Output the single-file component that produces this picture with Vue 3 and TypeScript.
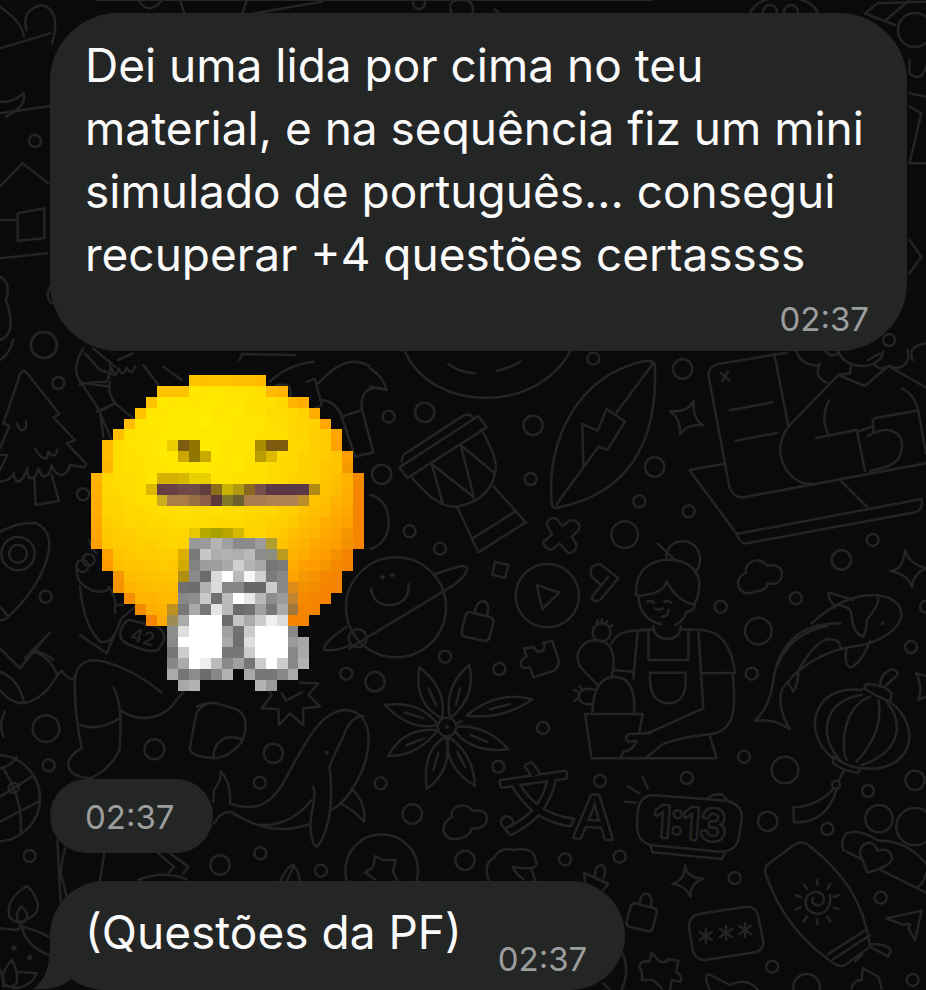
<script setup lang="ts">
interface Message {
  id: number
  lines: string[]
  time: string
}

interface Cell {
  x: number
  y: number
  fill: string
}

type Dot = [number, number, number]

const first: Message = {
  id: 1,
  lines: [
    'Dei uma lida por cima no teu',
    'material, e na sequência fiz um mini',
    'simulado de português... consegui',
    'recuperar +4 questões certassss',
  ],
  time: '02:37',
}
const last: Message = { id: 3, lines: ['(Questões da PF)'], time: '02:37' }

// First and last filled column of the face, one pair per pixel row.
const faceSpans: [number, number][] = [
  [9, 15], [6, 17], [5, 19], [4, 20], [3, 21], [2, 22], [1, 22], [1, 23], [1, 23],
  [0, 24], [0, 24], [0, 24], [0, 24], [0, 24], [0, 24], [0, 24],
  [1, 23], [1, 23], [2, 22], [2, 22], [3, 21], [4, 20], [5, 19],
]

// Row, first column, then colours: two digits are a grey, six a full colour.
const details: [number, number, string][] = [
  [6, 7, 'ecce00 7c5c10 917400'],
  [6, 15, 'a98c00 7b5c10 805c10'],
  [7, 8, 'cca700 8f7600 c9a900'],
  [7, 15, 'b99d00 dcb900'],
  [9, 6, 'd3b300 d3b300 d7b800 e9cf00 e9cf00'],
  [10, 5, 'dcb900 684044 684044 704a48 704a48 603e3c 8b6c1c c9b200 b09a10 8b6820 75504a 5a3846 5a3846 5a3846 5a3846 b18c12'],
  [11, 6, 'cbae20 a97c48 a97c48 967040 8c5e48 5b383c 807826 6b6030 a97c50 a97c50 b08252 b08252 b08252 b98d2a'],
  [14, 9, 'e8c800 b5a800 a9a000 b9a500 d4b900'],
  [15, 9, '99 9b b4 a0 8b 8b 9c b0a030'],
  [16, 8, 'dcae00 78 c6 ad b2 ae b9 8c 8e8e80 bc9c20'],
  [17, 8, 'd5aa00 82 9c 9e a9 d0 b4 a9 76 7b'],
  [18, 8, 'b28f10 8a 6b d9 ff b9 f6 d0 7b 88'],
  [19, 8, '70 6d b1 dc 85 85 68 68 cc 88 dc8b18'],
  [20, 8, '88 8e c9 70 bb ff e8 b8 8c 9b c48530'],
  [21, 7, 'be9020 78 aa 77 e4 ba 6a 70 a0 78 aa a3763a'],
  [22, 7, '9e8c54 aa ff ff ff 6d c4 aa cc f0 dd'],
  [23, 7, '8c de ff ff ff a0 70 cc ff ff ff 88'],
  [24, 7, '8a ff ff ff ff aa 70 de ff ff ff 9a a8'],
  [25, 7, '76 cc ff ff ff 77 77 cc ff ff ff 88 aa'],
  [26, 7, '88 aa ff ee bb 88 a0 76 cc ff cc 88 b2'],
  [27, 7, 'aa 76 8c 6c 88 b2'],
  [27, 14, 'a8 76 76 88 aa'],
  [28, 8, 'a8 b2'],
  [28, 15, 'b2 99'],
]

function faceColour(x: number, y: number): string {
  const [start, end] = faceSpans[y]
  const above = faceSpans[y - 1]
  const edge = x === start || x === end || !above || x < above[0] || x > above[1]
  const distance = (x - 9) ** 2 + (y - 5) ** 2
  const lowerRight = Math.max(0, x + y - 30) * 3
  const grain = ((x * 7 + y * 11) % 5) - 2
  const green = Math.round(234 - distance * 0.22 - lowerRight - (edge ? 34 : 0) + grain)
  return `rgb(${green < 155 ? 245 : 255}, ${Math.max(132, green)}, 0)`
}

const stickerCells: Cell[] = []
faceSpans.forEach(([start, end], y) => {
  for (let x = start; x <= end; x++) stickerCells.push({ x, y, fill: faceColour(x, y) })
})
for (const [y, start, colours] of details) {
  colours.split(' ').forEach((code, i) => {
    stickerCells.push({ x: start + i, y, fill: '#' + (code.length === 2 ? code.repeat(3) : code) })
  })
}

// Each patch of the wallpaper is drawn in thirds of a pixel from its own origin.
interface Patch {
  at: string
  lines: string[]
  rings: Dot[]
  dots?: Dot[]
}

const patches: Patch[] = [
  {
    at: 'translate(370 350) scale(.33333)',
    lines: [
      'M105 5C190 190 500 190 600 5M235 42Q270 68 315 70M380 62Q420 55 452 34',
      'M0 435C75 450 75 580 0 597M0 55Q40 80 50 120Q25 115 0 110',
      'M95 335Q95 315 110 308L275 200Q295 185 312 205M88 352L325 198L350 232L112 384ZM122 378Q200 475 260 470Q370 450 378 350Q375 310 335 240M218 460L185 342L312 442L272 285L372 368M262 472L325 607L467 517L370 408M308 565L435 485',
      'M545 460C530 270 620 80 820 34Q858 28 855 50C860 200 830 420 562 473Q545 476 545 460M560 462L685 290L712 300L765 215L710 177L683 242L637 222L640 345M740 187L850 40',
      'M560 507L577 528L598 513Q620 505 629 528Q630 540 605 560L620 585Q618 608 595 609L568 580L545 600Q520 595 520 575L547 553L530 525Q535 497 560 507Z',
    ],
    rings: [[670, 26, 18], [56, 200, 18], [164, 187, 29], [489, 226, 29], [482, 387, 18], [35, 373, 29], [808, 454, 18], [119, 544, 18], [210, 596, 18], [764, 554, 40]],
  },
  {
    at: 'translate(640 350) scale(.33333)',
    lines: [
      'M90 183Q140 190 162 153Q155 205 190 226Q140 220 120 255Q125 210 90 183Z',
      'M440 8L235 42Q200 50 207 85L268 410Q280 445 310 442L858 340M403 12L445 228M270 181L397 157M288 272L413 248M242 68L268 92M264 64L246 94',
      'M250 342L148 360L290 552L845 447Q850 480 825 487L320 580Q305 583 290 555M603 393L680 470',
      'M595 75L445 230C400 290 420 370 490 400L525 403M595 75L675 108L745 48L858 112M470 5Q485 50 540 45M540 40Q520 80 560 98M595 75L630 70L632 50M555 0Q570 25 595 10M595 5C620 65 720 60 730 5M705 42Q715 65 745 48Q790 65 805 25L803 0',
      'M568 150Q540 200 565 255M528 264L650 240L675 362M655 245L700 228M785 115Q830 135 838 200L858 310M700 245L698 210L710 203L830 182M685 257C760 215 800 260 782 310Q775 350 690 362',
    ],
    rings: [[128, 57, 29], [44, 351, 29], [146, 484, 18], [698, 570, 18], [604, 630, 29]],
  },
  {
    at: 'translate(370 540) scale(.33333)',
    lines: [
      'M190 105Q290 65 292 85Q285 120 215 157L-62 325M3 145Q10 195 60 196Q118 190 116 132',
      'M375 65L415 75L405 114L367 104ZM500 135L568 158L517 207Z',
      'M300 217L360 231Q373 236 370 248L358 293Q355 305 342 302L286 290Q273 286 275 275L286 227Q290 216 300 217M315 215Q320 180 345 184Q362 198 350 228',
      'M690 132L665 110Q653 75 690 72L745 115L690 180Q670 190 665 172L715 110',
      'M547 303L567 365Q565 385 550 393L490 412L480 382Q450 390 452 368Q460 350 470 350L462 325L492 322Q500 340 520 332Q525 315 520 308Z',
      'M680 250L683 240M695 248L696 238M708 252L712 243M718 262L728 256M680 432L630 380C605 330 650 300 675 300C740 300 735 370 725 410M674 450C615 430 610 500 665 492M635 447L628 437M624 455L612 450M624 475L613 483',
      'M667 520Q670 410 735 410Q800 415 792 520M808 578L818 522L645 522L665 655L810 655M840 580L775 582Q760 595 775 605L800 603Q790 630 760 635L750 655M725 310Q745 270 800 272L840 268M803 275L790 415M730 390L790 395',
      'M148 382Q130 490 215 535Q235 450 148 382M298 375Q220 440 240 535Q320 470 298 375M45 495Q120 575 205 555Q150 480 45 495M290 527Q400 540 487 478Q380 450 290 527M55 648Q140 650 205 570Q100 560 55 648M265 560Q350 555 415 628Q310 640 258 578M170 747Q155 630 228 590Q250 690 170 747M315 738Q220 680 235 590Q310 640 315 738',
      'M175 445L198 495M270 445L258 495M105 517L160 535M360 508L420 492M110 615L162 595M302 585L350 605M190 690L205 640M262 635L285 680M262 550L275 543',
    ],
    rings: [[78, 202, 150], [532, 167, 95], [225, 350, 18], [388, 387, 18], [15, 425, 29], [519, 564, 18], [695, 277, 27], [231, 561, 28]],
    dots: [[38, 112, 7], [67, 105, 7], [231, 561, 6]],
  },
  {
    at: 'translate(640 540) scale(.33333)',
    lines: [
      'M80 58C70-10 180-20 180 60Q180 80 165 100M52 10L100 55M-10 165Q-15 130 0 105C30 40 170 40 178 130Q178 165 165 188M-15 165L0 167Q75 160 80 122Q105 180 165 195Q160 215 140 215Q130 245 105 255M-5 170Q0 240 65 253',
      'M22 185Q33 180 42 188M72 185Q83 180 94 188M45 205Q60 213 68 205M65 230Q85 230 85 210M40 258C40 310 125 310 122 258M0 270L40 270M122 268L190 270Q270 280 285 398L188 400M25 272L25 360L145 360L145 270M175 272L190 505L35 575Q20 580 0 580M30 398L136 398Q145 490 85 490Q25 490 30 398ZM278 400C290 520 280 570 215 582Q100 595 65 615L22 650M210 590L230 655L-20 655',
      'M383 130C440 145 440 60 383 78C350 40 310 75 318 98C270 120 300 180 350 153Q375 155 383 130',
      'M515 250C600 170 690 150 750 175C830 220 760 300 650 318C540 330 460 400 445 425C410 450 415 510 450 568Q405 535 345 542Q390 500 400 420C420 290 500 250 600 250M410 380Q450 280 560 258M585 203Q550 150 575 160L640 180M585 195Q635 195 635 230Q640 280 668 290Q680 280 680 240Q715 200 715 175M470 400Q520 310 560 298Q600 295 600 320M620 325Q610 380 635 382Q670 360 690 303M443 425L460 455Q475 430 475 395',
      'M858 85Q805 70 795 30Q790 90 750 93Q800 100 816 140Q820 100 858 85M858 408L828 400Q850 440 835 480L858 470',
      'M720 440Q720 400 755 388Q790 395 755 420L735 440M672 445L678 432Q740 435 755 462L750 485M672 445Q700 465 750 485M690 470C610 500 600 620 620 660M715 480C730 560 690 620 650 665M665 465C550 480 530 590 605 665M740 485C800 560 770 640 665 675M665 450C520 430 480 580 580 655M750 485C850 560 820 700 665 685M580 650L578 668Q610 695 655 698L660 685Q620 680 580 650',
    ],
    rings: [[242, 200, 18], [467, 175, 18], [355, 273, 40], [335, 401, 18], [813, 321, 18], [312, 650, 18], [435, 690, 40], [858, 200, 18]],
    dots: [[728, 250, 6]],
  },
  {
    at: 'translate(200 680) scale(.33333)',
    lines: [
      'M-10 80Q20 65 50 70L110 88Q150 110 130 175L122 190Q90 230 45 235Q-35 230-30 200L-12 105Q-5 80 30 68M40 232Q45 170 100 172L125 178',
      'M200 20L215 45L185 85L235 88L237 135L270 100L310 135L310 85L360 80L325 45L355 10L300 8M245 40L258 62L305 38',
      'M62 273Q95 310 90 370C170 400 220 370 260 290C330 160 370 90 440 90C530 100 520 230 455 330Q430 370 395 390M62 273Q65 300 42 330L40 365M42 430Q65 390 95 397C180 450 250 460 330 432M180 435Q270 440 335 360M340 320Q348 340 335 400C325 460 340 500 350 500C380 470 405 380 388 260Q400 230 430 170Q450 110 490 108M455 325Q500 370 492 425Q460 390 425 372',
      'M592 600L578 575L588 540L548 540L525 528L520 560L495 578L525 598M242 600Q265 555 280 555Q300 580 298 600M262 600L280 560',
    ],
    rings: [[220, 220, 29], [179, 308, 18], [542, 310, 18], [637, 402, 29], [60, 555, 29], [181, 520, 18], [363, 572, 18], [545, 572, 109]],
    dots: [[381, 218, 6]],
  },
  {
    at: 'translate(440 750) scale(.33333)',
    lines: [
      'M95 235C150 245 160 170 100 183C70 150 25 175 37 200C-10 225 10 280 60 265Q90 260 95 235',
      'M607 80L623 115M563 108L597 130M553 155L588 158',
      'M145 390Q130 340 160 325Q180 290 220 300Q280 290 285 325Q300 350 270 355Q240 355 220 350Q220 365 250 388M275 360L285 390M435 395L432 368L505 402L490 420M465 375Q465 345 485 345Q503 355 490 385',
      'M585 460L640 474Q653 478 650 490L638 533Q635 546 622 543L572 531Q557 528 560 515L572 470Q576 458 585 460M598 460Q605 425 625 432Q640 445 632 470M548 610Q570 660 545 720M490 700L510 720',
    ],
    rings: [[175, 50, 18], [480, 93, 18], [201, 217, 18], [75, 331, 29], [375, 328, 18], [539, 320, 18]],
  },
  {
    at: 'translate(640 750) scale(.33333)',
    lines: [
      'M35 135L260 152Q310 165 305 210L295 270Q285 305 240 305L30 285Q-15 270-8 210Q-10 140 35 135M205 145Q215 130 245 133L262 150M32 290L38 307L245 327L255 310',
      'M35 608L60 635Q80 640 85 628L115 632L108 665Q130 680 122 695L95 690L90 720M35 608L28 635Q0 630-2 650Q10 670 5 690L40 690L65 715',
      'M610 65L595 95M583 115Q530 170 460 172L462 217Q560 220 590 118',
      'M135 345Q140 385 190 386Q150 400 152 440Q135 405 97 402Q135 390 135 345Z',
      'M175 492L320 470Q350 470 355 500L370 575Q370 600 345 607L195 630Q165 630 158 600L147 530Q147 500 175 492Z',
      'M465 283Q487 270 512 290C610 370 670 450 690 590L615 645Q600 655 570 632C470 560 410 470 378 375Q370 350 390 338ZM565 612L680 538M580 628L690 555M570 435C580 510 490 505 497 450C505 415 560 420 550 455C540 480 505 460 520 443',
      'M532 390V405M571 402L562 416M596 435L581 441M596 478L581 472M571 514L562 500M532 523V508M491 514L501 500M467 478L482 472M467 435L482 441M491 402L501 416',
      'M690 590L745 620L752 600Q740 580 695 583M645 635L665 615',
      'M660 325L610 300Q600 270 620 250Q660 235 715 272Q800 270 858 340M725 362L858 428M858 370Q850 400 835 410M682 368L660 310Q660 280 690 278Q710 285 712 302Q750 290 757 325Q750 350 682 368Z',
      'M740 505L845 482L825 570L805 535Q820 515 790 525ZM210 720Q190 680 205 672L270 705Q320 680 355 720M635 715Q640 690 665 690L668 655L715 680L725 715',
    ],
    rings: [[141, 84, 18], [383, 214, 29], [684, 123, 18], [825, 91, 29], [562, 237, 18], [717, 206, 41], [825, 230, 56], [284, 384, 18], [722, 443, 18], [397, 650, 18], [818, 690, 18], [500, 712, 40], [588, 104, 12]],
  },
  {
    at: 'translate(0 340) scale(.33333)',
    lines: [
      'M0 325L28 258L10 250L62 98Q72 85 90 110L178 222L160 232L225 300L200 310L258 370Q260 385 240 380L210 375Q205 405 180 405Q165 400 155 375Q150 410 130 410Q120 400 115 385Q110 415 90 415Q80 405 82 385Q70 425 50 425Q40 410 42 400Q25 425 0 425M103 415L107 495L177 483L155 405M50 250Q60 275 70 270Q82 265 78 245M105 325Q125 360 140 355L145 335Q165 360 172 330M0 390L22 345L0 345M0 60Q30 40 40 0',
      'M0 575Q60 545 110 550Q150 570 148 620C140 700 80 780 25 830Q10 842 0 840M0 800L25 830M75 955L150 878M95 930Q140 940 160 960',
      'M250 25Q210 90 245 130L300 215L310 290M240 128L330 140M300 215L345 190M255 40L300 90L345 105M280 25L345 80',
      'M230 690Q230 740 290 755Q320 755 330 745M268 600Q275 630 290 640',
    ],
    rings: [[131, 15, 39], [175, 129, 18], [249, 463, 18], [54, 641, 50], [54, 641, 27], [137, 770, 18], [247, 678, 18], [266, 660, 18]],
  },
  {
    at: 'translate(80 365) scale(.33333)',
    lines: [
      'M0 60Q30 50 80 50Q95 20 90 0M90 50Q80 80 105 115L165 165M50 140L105 115M60 145L95 225M190 0L235 60M95 10Q110 45 115 10Q130 40 140 8Q155 35 165 5M250 5L305 45',
      'M590 60Q640 50 630 95M570 50Q620 0 700 -10M715 55Q800-40 870 5M680 50L705 42L725 120L705 130M785 155L845 135M725 105Q770 110 785 155L825 275L880 262L845 130Q840 60 905 70',
    ],
    rings: [],
  },
  {
    at: 'translate(80 525) scale(.33333)',
    lines: [
      'M0 185Q10 300 60 350Q90 355 100 330M85 185Q110 210 105 265M105 240H130M0 330L80 385L125 280L165 245',
      'M150 285L230 305Q260 320 250 350L235 375Q210 385 150 360Q110 345 125 310Q135 285 150 285',
      'M800 305Q720 360 735 375Q770 380 810 360',
    ],
    rings: [[833, 340, 27], [799, 446, 18]],
  },
  {
    at: 'translate(0 640) scale(.33333)',
    lines: [
      'M0 470L95 410M0 545L115 485M10 385Q70 480 62 580M0 385Q40 375 50 350M15 215Q-5 250 10 290',
      'M245 325Q220 200 225 110Q240 40 330 70Q410 95 485 158M340 143Q370 190 358 330Q330 390 270 415Q200 410 205 365Q215 340 245 325M238 255Q300 275 358 235M362 212Q440 260 510 205L550 155',
      'M100 35Q150 50 172 105Q130 180 70 190Q30 190 0 150M0 95Q60 120 72 190M0 25L60 85L130 0M172 105L185 92Q200 115 220 118',
      'M172 600L182 785M195 625Q185 660 182 700L200 770M313 640L300 720M475 640L522 680L505 700M510 640L565 680L550 700M415 720Q490 690 560 718',
      'M80 738Q15 780 28 830Q45 850 60 845Q120 830 113 790Q100 750 80 738M62 800Q40 830 60 850Q85 845 80 820Q75 805 62 800M0 865L50 870Q62 865 62 850L68 870Q85 920 145 945M68 860Q120 875 145 890M35 960Q0 1000 10 1030Q30 1050 50 1030Q55 990 35 960M50 995L110 1000Q95 1040 40 1045M0 990Q15 1020 10 1040',
    ],
    rings: [[138, 266, 40], [146, 376, 18], [463, 328, 30], [89, 648, 18], [41, 444, 15], [-10, 475, 130]],
    dots: [[42, 924, 8], [89, 953, 8]],
  },
  {
    at: 'scale(.5906 .33333)',
    lines: [
      'M45 90Q35 30 70 15Q105 30 88 130M0 20Q40 70 40 110M0 145L85 100M0 340L85 318M10 350Q45 320 40 280Q20 310 0 305M0 560L38 490L82 550M30 640L75 625L75 715L30 722ZM0 660H30M0 775L80 760M0 830Q20 850 10 900Q30 1000 0 1020M85 860Q75 890 88 910',
      'M235 0Q250 50 275 0M305 0L312 40M410 40L418 0M430 40L545 5M765 40Q755 0 780 0Q805 0 800 40M838 28L845 40M1270 40Q1280 0 1310-5M1385 40Q1380 10 1350-5',
      'M1465 40L1485 10L1568 5M1465 40L1515 75M1500 60L1540 0M1540 180L1540 220Q1560 250 1568 200M1540 280L1568 290M1540 320L1560 340L1540 490H1568M1540 720L1560 770L1540 820M405 1080L410 1062L500 1065M200 1080L225 1060M1568 1030Q1535 1040 1545 1080M1490 1060L1470 1080',
    ],
    rings: [],
  },
]

const asterisks: [number, number][] = [[706, 936], [726, 933], [745, 930]]

// Hollow letters: a wide stroke below, a narrower one in the page colour above.
const tubes = [
  { text: '文', size: 72, at: 'translate(504 829) rotate(-8)' },
  { text: 'A', size: 58, at: 'translate(573 837) rotate(3)' },
  { text: '1:13', size: 42, at: 'translate(653 836) rotate(4)' },
]
</script>

<template>
  <main class="chat">
    <svg class="wallpaper" viewBox="0 0 926 990" preserveAspectRatio="xMidYMin slice" aria-hidden="true">
      <g v-for="(patch, i) in patches" :key="i" :transform="patch.at">
        <path v-for="(d, j) in patch.lines" :key="'l' + j" :d="d" />
        <circle v-for="([cx, cy, r], j) in patch.rings" :key="'r' + j" :cx="cx" :cy="cy" :r="r" />
        <circle v-for="([cx, cy, r], j) in patch.dots ?? []" :key="'d' + j" class="dot" :cx="cx" :cy="cy" :r="r" />
      </g>
      <circle cx="35" cy="141" r="6" />
      <circle cx="44" cy="345" r="13" />
      <circle cx="419" cy="3" r="6" />
      <circle cx="770" cy="12" r="7" />
      <circle cx="791" cy="12" r="7" />
      <circle cx="915" cy="30" r="17" />
      <circle cx="889" cy="340" r="6" />
      <text
        v-for="tube in tubes"
        :key="tube.text"
        class="tube"
        :font-size="tube.size"
        :transform="tube.at"
      >{{ tube.text }}</text>
      <text class="tag" font-size="19" transform="translate(129 640) rotate(16)">42</text>
      <path v-for="([x, y], i) in asterisks" :key="i" :transform="`translate(${x} ${y})`" d="M0-7V7M-6-4L6 4M-6 4L6-4" />
    </svg>

    <div class="thread">
      <div class="earlier"></div>

      <article class="bubble">
        <p class="text">
          <span v-for="line in first.lines" :key="line" class="line">{{ line }}</span>
        </p>
        <time class="time">{{ first.time }}</time>
      </article>

      <article class="sticker-message">
        <svg class="sticker" viewBox="0 0 25 29" preserveAspectRatio="none" role="img" aria-label="Figurinha">
          <rect v-for="(cell, i) in stickerCells" :key="i" :x="cell.x" :y="cell.y" width="1" height="1" :fill="cell.fill" />
        </svg>
        <time class="time pill">02:37</time>
      </article>

      <article class="bubble inline">
        <svg class="tail" viewBox="0 0 40 52" aria-hidden="true">
          <path d="M17 0C17 28 14 40 0 51Q24 53 37 42L40 20Z" />
        </svg>
        <p class="text">{{ last.lines[0] }}</p>
        <time class="time">{{ last.time }}</time>
      </article>
    </div>
  </main>
</template>

<style>
body {
  margin: 0;
  background: #0a0a0a;
}
</style>

<style scoped>
.chat {
  position: relative;
  min-height: 100vh;
  overflow: hidden;
  background: #0a0a0a;
  font-family: Inter, "Liberation Sans", sans-serif;
}

.wallpaper {
  position: absolute;
  inset: 0;
  width: 100%;
  height: 100%;
  fill: none;
  stroke: #232424;
  stroke-width: 2.5px;
  stroke-linecap: round;
  stroke-linejoin: round;
}

.wallpaper path,
.wallpaper circle {
  vector-effect: non-scaling-stroke;
}

.wallpaper .dot {
  fill: #232424;
  stroke: none;
}

.tube {
  font-family: Inter, "Noto Sans CJK SC", sans-serif;
  fill: #0a0a0a;
  stroke-width: 5px;
  paint-order: stroke;
}

.tag {
  font-family: Inter, sans-serif;
  font-weight: 600;
  fill: #232424;
  stroke: none;
}

.thread {
  position: relative;
  display: flex;
  flex-direction: column;
  align-items: flex-start;
  padding: 0 19px 0 50px;
}

.earlier {
  width: 65%;
  height: 1px;
  margin: 0 0 12px 46px;
  background: #242626;
}

.bubble {
  position: relative;
  box-sizing: border-box;
  display: flex;
  flex-direction: column;
  align-self: stretch;
  padding: 21px 38px 12px 35px;
  border-radius: 68px;
  background: #242626;
}

.text {
  margin: 0;
  color: #fafafa;
  font-size: 46px;
  line-height: 63px;
  white-space: nowrap;
}

.line {
  display: block;
}

.time {
  align-self: flex-end;
  margin-top: 13px;
  color: #9c9d9d;
  font-size: 33px;
  line-height: 40px;
}

.sticker-message {
  display: flex;
  flex-direction: column;
  align-items: flex-start;
  margin: 24px 0 28px;
}

.sticker {
  width: 273px;
  height: 316px;
  margin-left: 41px;
  shape-rendering: crispEdges;
}

.pill {
  align-self: flex-start;
  margin-top: 88px;
  padding: 18px 38px 16px 35px;
  border-radius: 37px;
  background: #242626;
}

.inline {
  flex-direction: row;
  align-self: flex-start;
  gap: 36px;
  padding: 20px 38px 11px 35px;
  border-radius: 56px;
}

.inline .time {
  margin-top: 38px;
}

.tail {
  position: absolute;
  left: -17px;
  bottom: 0;
  width: 40px;
  height: 52px;
  fill: #242626;
}
</style>
